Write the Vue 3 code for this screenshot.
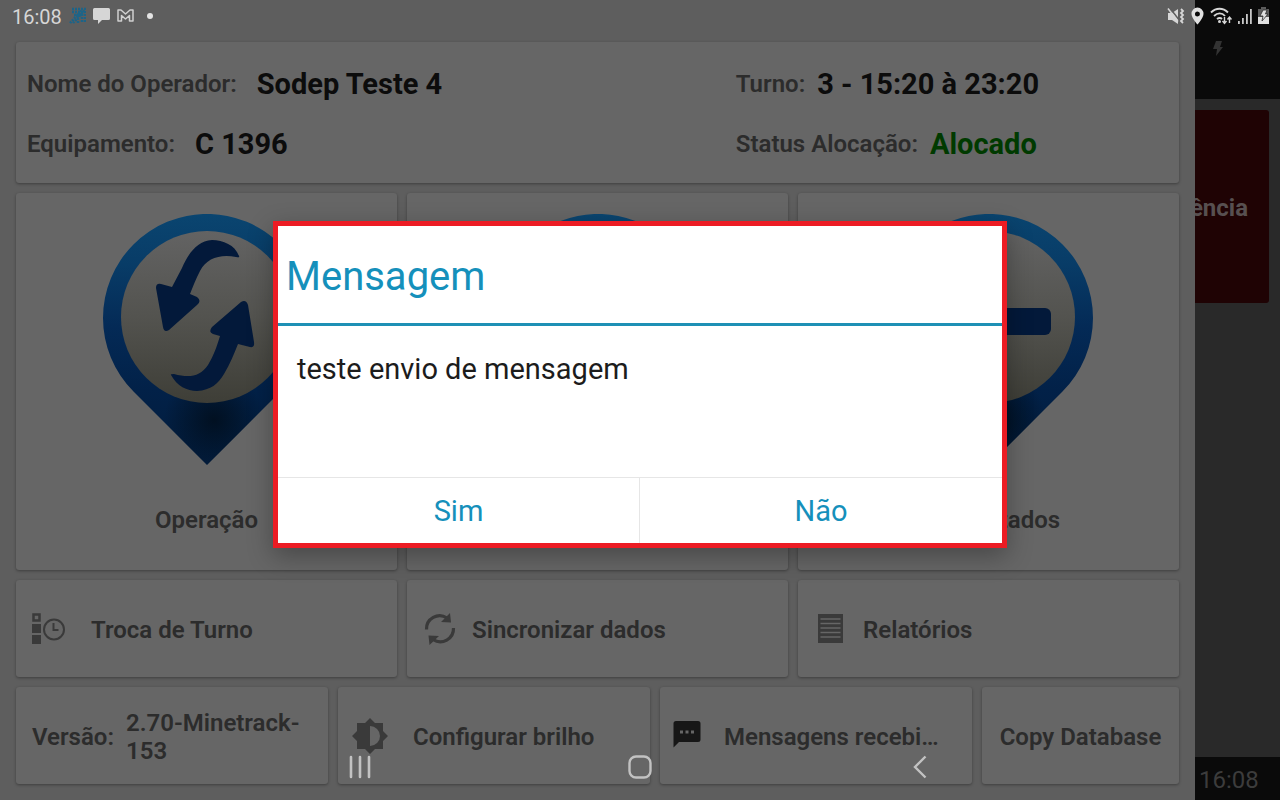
<template>
  <div class="screen">
    <main class="drawer">
      <section class="card info">
        <div v-for="field in fields" :key="field.label" class="field" :class="{ tight: field.tight }">
          <span class="field-label">{{ field.label }}</span>
          <strong class="field-value" :class="{ ok: field.ok }">{{ field.value }}</strong>
        </div>
      </section>

      <section class="row thirds">
        <button v-for="tile in tiles" :key="tile.id" class="card tile" type="button" :aria-label="tile.id">
          <svg class="pin" viewBox="0 0 210 252" aria-hidden="true">
            <defs>
              <linearGradient :id="'ring-' + tile.id" x1="0" y1="0" x2="0" y2="1">
                <stop offset="0" stop-color="#0a4570" />
                <stop offset="0.2" stop-color="#083c67" />
                <stop offset="0.45" stop-color="#042a56" />
                <stop offset="0.7" stop-color="#022148" />
                <stop offset="1" stop-color="#021c3c" />
              </linearGradient>
              <radialGradient :id="'tip-' + tile.id" gradientUnits="userSpaceOnUse" cx="112" cy="206" r="50">
                <stop offset="0" stop-color="#011021" />
                <stop offset="1" stop-color="#011021" stop-opacity="0" />
              </radialGradient>
              <linearGradient :id="'face-' + tile.id" x1="0" y1="0" x2="0" y2="1">
                <stop offset="0" stop-color="#636363" />
                <stop offset="0.5" stop-color="#53534f" />
                <stop offset="1" stop-color="#3e3e37" />
              </linearGradient>
            </defs>
            <path d="M105 251 31.500 177.500A104 104 0 1 1 178.500 177.500Z" :fill="`url(#ring-${tile.id})`" />
            <path d="M105 251 31.500 177.500A104 104 0 1 1 178.500 177.500Z" :fill="`url(#tip-${tile.id})`" />
            <circle cx="105" cy="103" r="86" :fill="`url(#face-${tile.id})`" />
            <g v-if="tile.icon === 'swap'" fill="#03193a">
              <path d="M137 42C133 31 121 26 110 26C95 27 86 40 80 54L70 73L59 70Q54 69 54 74L61 113Q62 119 67 116L95 91Q100 87 95 83L88 80C91 72 94 65 98 57C105 44 118 40 134 43Q138 44 137 42Z" />
              <path d="M69 161C75 172 85 177 95 177C109 176 116 170 122 160C128 150 132 140 136 130L148 133Q153 134 152 128L146 91Q144 85 139 88L110 113Q106 118 111 120L118 122C115 132 112 141 106 151C98 163 87 164 72 160Q68 160 69 161Z" />
            </g>
            <rect v-if="tile.icon === 'minus'" x="43" y="94" width="124" height="27" rx="6" fill="#03193a" />
          </svg>
          <span v-if="tile.label" class="tile-label">{{ tile.label }}</span>
        </button>
      </section>

      <section class="row thirds">
        <button class="card action wide-gap" type="button">
          <svg class="icon" viewBox="0 0 34 34" aria-hidden="true">
            <path d="M1.500 1.500h6v6h-6z" fill="none" stroke="#3a3a3a" stroke-width="2.500" />
            <path d="M0 11h9v9H0zM0 22h9v9H0z" fill="#3a3a3a" />
            <circle cx="22" cy="16.500" r="10" fill="none" stroke="#3a3a3a" stroke-width="2" />
            <path d="M21.500 10v7h5" fill="none" stroke="#3a3a3a" stroke-width="2" />
          </svg>
          <span>Troca de Turno</span>
        </button>
        <button class="card action" type="button">
          <svg class="icon" viewBox="0 0 34 34" aria-hidden="true">
            <path d="M3.500 16.500A13.200 13.200 0 0 1 24 5M30.500 15A13.200 13.200 0 0 1 10 26.500" fill="none" stroke="#3a3a3a" stroke-width="3.200" />
            <path d="M27 0l1 9.500-10-.5zM6.500 32l-1-9.500 10.500.500z" fill="#3a3a3a" />
          </svg>
          <span>Sincronizar dados</span>
        </button>
        <button class="card action" type="button">
          <svg class="icon" viewBox="0 0 34 34" aria-hidden="true">
            <path d="M4 1h25v29H4z" fill="#3a3a3a" />
            <path d="M6.500 6h20M6.500 10.500h20M6.500 15h20M6.500 19.500h20M6.500 24h20" stroke="#666666" stroke-width="1.600" />
          </svg>
          <span>Relatórios</span>
        </button>
      </section>

      <section class="row footer-row">
        <div class="card action version">
          <span>Versão:</span>
          <span>2.70-Minetrack-153</span>
        </div>
        <button class="card action wide-gap" type="button">
          <svg class="icon" viewBox="0 0 36 36" aria-hidden="true">
            <path d="M18-1l5 5h8v8l5 5-5 5v8h-8l-5 5-5-5H5v-8l-5-5 5-5V4h8z" fill="#3a3a3a" />
            <path d="M18 7a10 10 0 0 1 0 20z" fill="#666666" />
          </svg>
          <span>Configurar brilho</span>
        </button>
        <button class="card action messages" type="button">
          <svg class="icon" viewBox="0 0 36 36" aria-hidden="true">
            <path d="M6 2h22a2.500 2.500 0 0 1 2.500 2.500v16A2.500 2.500 0 0 1 28 23H9l-5.500 5.500v-24A2.500 2.500 0 0 1 6 2z" fill="#171717" />
            <path d="M10 11.500h3v3h-3zM15.500 11.500h3v3h-3zM21 11.500h3v3h-3z" fill="#666666" />
          </svg>
          <span>Mensagens recebi…</span>
        </button>
        <button class="card action copy" type="button">Copy Database</button>
      </section>
    </main>

    <aside class="backdrop">
      <div class="backdrop-top">
        <svg viewBox="0 0 10 16" aria-hidden="true"><path d="M3 0h6L7 6h3L3 15l1-7H0z" fill="#333333" /></svg>
      </div>
      <button class="emergency" type="button" aria-label="Emergência">ência</button>
      <div class="backdrop-clock">16:08</div>
    </aside>

    <header class="status-bar">
      <div class="status-left">
        <span class="clock">16:08</span>
        <svg width="17" height="18" viewBox="0 0 17 18" aria-hidden="true">
          <path d="M3 2h13v13M3 5h13M1 16l12-13M5 8h9M4 16l12-13M9 8v8M13 4v12" fill="none" stroke="#1d6488" stroke-width="2.500" stroke-dasharray="2 1" />
        </svg>
        <svg width="17" height="18" viewBox="0 0 17 18" aria-hidden="true">
          <path d="M1.500 1h14A1.500 1.500 0 0 1 17 2.500v9a1.500 1.500 0 0 1-1.500 1.500H9l-4 4v-4H1.500A1.500 1.500 0 0 1 0 11.500v-9A1.500 1.500 0 0 1 1.500 1z" fill="#d6d6d6" />
        </svg>
        <svg width="17" height="18" viewBox="0 0 17 18" aria-hidden="true">
          <path d="M1 3h3l4.500 4L13 3h3v11h-3.500V8.500L8.500 12l-4-3.500V14H1z" fill="none" stroke="#d0d0d0" stroke-width="1.500" stroke-linejoin="round" />
        </svg>
        <i class="dot"></i>
      </div>
      <div class="status-right">
        <svg width="18" height="18" viewBox="0 0 18 18" aria-hidden="true">
          <path d="M1 6h4l6-4v15l-6-4H1z" fill="#d6d6d6" />
          <path d="M2.500.500l10 13" stroke="#5e5e5e" stroke-width="1.500" />
          <path d="M1 1.500l10 13" stroke="#d6d6d6" stroke-width="1.500" />
          <path d="M14 2l2 2-2 2 2 2-2 2 2 2-2 2 2 2" fill="none" stroke="#d6d6d6" stroke-width="1.800" />
        </svg>
        <svg width="13" height="18" viewBox="0 0 12 18" aria-hidden="true">
          <path fill-rule="evenodd" d="M6 .500a6.300 6.300 0 0 1 6 6.500c0 4-6 10.500-6 10.500S0 11 0 7A6.300 6.300 0 0 1 6 .500zm0 4a2.500 2.500 0 1 0 0 5 2.500 2.500 0 0 0 0-5z" fill="#e0e0e0" />
        </svg>
        <svg width="22" height="18" viewBox="0 0 22 18" aria-hidden="true">
          <path d="M1 5.500c5-5 12-5 17 0M4 9c3.500-3.500 8-3.500 11 0M7 12c2-1.500 3.500-1.500 5 0" fill="none" stroke="#d6d6d6" stroke-width="1.900" />
          <circle cx="9.500" cy="14.500" r="1.500" fill="#d6d6d6" />
          <path d="M14.500 10v6M12.500 14l2 2.500 2-2.500M19.500 16v-5.500M17.500 12.500l2-2.500 2 2.500" fill="none" stroke="#d6d6d6" stroke-width="1.400" />
        </svg>
        <svg width="14" height="18" viewBox="0 0 14 18" aria-hidden="true">
          <path d="M0 14h1.800v3H0zM4 11h1.800v6H4zM8 7h1.800v10H8zM12 2h1.800v15H12z" fill="#c8c8c8" />
        </svg>
        <svg width="12" height="18" viewBox="0 0 12 18" aria-hidden="true">
          <path d="M3 0h5v2h3v9H0V2h3z" fill="#5c5c5c" />
          <path d="M0 10h11v7H0z" fill="#e0e0e0" />
          <path d="M5 3h4L7.500 7H10l-6 7 1-5H2z" fill="#e0e0e0" stroke="#2c2c2c" stroke-width="0.800" />
        </svg>
      </div>
    </header>

    <nav class="nav-bar">
      <button type="button" aria-label="Recentes">
        <svg width="24" height="24" viewBox="0 0 24 24"><path d="M3 2v20M12 2v20M21 2v20" stroke="#c2c2c2" stroke-width="2.600" stroke-linecap="round" /></svg>
      </button>
      <button type="button" aria-label="Início">
        <svg width="24" height="24" viewBox="0 0 24 24"><rect x="1.500" y="1.500" width="21" height="21" rx="6.500" fill="none" stroke="#c2c2c2" stroke-width="2.400" /></svg>
      </button>
      <button type="button" aria-label="Voltar">
        <svg width="24" height="24" viewBox="0 0 24 24"><path d="M17.500 1.500L7 12l10.500 10.500" fill="none" stroke="#c2c2c2" stroke-width="2.400" /></svg>
      </button>
    </nav>

    <div v-if="isOpen" class="modal-overlay">
      <div class="modal-box" role="dialog" aria-labelledby="modal-title">
        <h2 id="modal-title" class="modal-title">Mensagem</h2>
        <p class="modal-text">teste envio de mensagem</p>
        <div class="modal-actions">
          <button type="button" @click="close">Sim</button>
          <button type="button" @click="close">Não</button>
        </div>
      </div>
    </div>
  </div>
</template>

<script setup>
import { ref } from 'vue'

const isOpen = ref(true)

const fields = [
  { label: 'Nome do Operador:', value: 'Sodep Teste 4' },
  { label: 'Turno:', value: '3 - 15:20 à 23:20', tight: true },
  { label: 'Equipamento:', value: 'C 1396' },
  { label: 'Status Alocação:', value: 'Alocado', tight: true, ok: true }
]

const tiles = [
  { id: 'operacao', label: 'Operação', icon: 'swap' },
  { id: 'central', label: '', icon: '' },
  { id: 'completados', label: 'Completados', icon: 'minus' }
]

const close = () => {
  isOpen.value = false
}
</script>

<style>
body {
  margin: 0;
  background: #292929;
}
</style>

<style scoped>
.screen {
  position: relative;
  min-height: 100vh;
  display: grid;
  grid-template-columns: 1fr 85px;
  font-family: Roboto, "Liberation Sans", sans-serif;
  color: #2c2c2c;
  overflow: hidden;
}

button {
  font: inherit;
  color: inherit;
  border: none;
  background: none;
  padding: 0;
  cursor: pointer;
}

.drawer {
  box-sizing: border-box;
  min-width: 0;
  padding: 42px 16px 16px;
  display: grid;
  grid-template-rows: auto 1fr 97px 97px;
  gap: 10px;
  background: #5e5e5e;
}

.card {
  box-sizing: border-box;
  min-width: 0;
  background: #666666;
  border-radius: 3px;
  box-shadow: 0 1px 3px rgba(0, 0, 0, 0.35);
}

.info {
  display: grid;
  grid-template-columns: 1.64fr 1fr;
  grid-auto-rows: 60px;
  padding: 12px 11px 9px;
}

.field {
  display: flex;
  align-items: center;
  gap: 20px;
  white-space: nowrap;
}

.field.tight {
  gap: 12px;
}

.field-label {
  font-size: 24px;
  font-weight: 600;
}

.field-value {
  font-size: 29px;
  font-weight: 700;
  color: #0c0c0c;
}

.field-value.ok {
  color: #003a00;
}

.row {
  display: grid;
  gap: 10px;
}

.thirds {
  grid-template-columns: repeat(3, 1fr);
}

.footer-row {
  grid-template-columns: repeat(3, 1fr) auto;
}

.tile {
  display: flex;
  flex-direction: column;
  align-items: center;
  gap: 40px;
  padding-top: 21px;
}

.pin {
  width: 210px;
  height: 252px;
}

.tile-label {
  font-size: 24px;
  line-height: 28px;
  font-weight: 600;
}

.action {
  display: flex;
  align-items: center;
  gap: 15px;
  padding: 2px 16px 0;
  font-size: 24px;
  line-height: 28px;
  font-weight: 600;
  text-align: left;
  white-space: nowrap;
}

.icon {
  flex: none;
  width: 34px;
  height: 34px;
  overflow: visible;
}

.wide-gap {
  gap: 25px;
}

.footer-row .icon {
  width: 36px;
  height: 36px;
}

.footer-row .wide-gap {
  padding-left: 14px;
}

.messages {
  gap: 18px;
  padding: 2px 16px 0 10px;
}

.copy {
  min-width: 197px;
  justify-content: center;
}

.version {
  gap: 12px;
  white-space: normal;
}

.backdrop {
  display: flex;
  flex-direction: column;
  background: #292929;
  overflow: hidden;
}

.backdrop-top {
  height: 99px;
  background: #0a0a0a;
}

.backdrop-top svg {
  width: 10px;
  height: 16px;
  margin: 41px 0 0 18px;
}

.emergency {
  display: flex;
  align-items: center;
  justify-content: flex-end;
  height: 193px;
  margin: 11px 11px 0 0;
  padding: 2px 21px 0 0;
  border-radius: 0 3px 3px 0;
  background: #1f0304;
  color: #575050;
  font-size: 24px;
  font-weight: 700;
}

.backdrop-clock {
  margin-top: auto;
  padding-left: 4px;
  height: 43px;
  line-height: 46px;
  background: #0a0a0a;
  color: #3c3c3c;
  font-size: 24px;
}

.status-bar {
  position: absolute;
  top: 0;
  left: 0;
  right: 0;
  height: 32px;
  padding: 0 10px 0 12px;
  display: flex;
  justify-content: space-between;
}

.status-left,
.status-right {
  display: flex;
  align-items: center;
  gap: 7px;
}

.status-right {
  gap: 6px;
}

.clock {
  font-size: 20px;
  line-height: 34px;
  padding-top: 1px;
  color: #d6d6d6;
}

.dot {
  width: 6px;
  height: 6px;
  margin-left: 6px;
  border-radius: 50%;
  background: #e4e4e4;
}

.nav-bar {
  position: absolute;
  bottom: 9px;
  left: 0;
  right: 0;
  max-width: 840px;
  margin: 0 auto;
  display: flex;
}

.nav-bar button {
  flex: 1;
  height: 48px;
  display: flex;
  align-items: center;
  justify-content: center;
}

.modal-overlay {
  position: absolute;
  inset: 0 0 31px;
  display: flex;
  align-items: center;
  justify-content: center;
}

.modal-box {
  box-sizing: border-box;
  width: 734px;
  max-width: 100%;
  background: #ffffff;
  border: 5px solid #ec1c24;
  box-shadow: 0 8px 24px rgba(0, 0, 0, 0.3);
}

.modal-title {
  margin: 0;
  padding: 5px 8px 0;
  border-bottom: 3px solid #1e90b5;
  color: #1590bb;
  font-size: 40px;
  line-height: 92px;
  font-weight: 400;
}

.modal-text {
  margin: 0;
  min-height: 108px;
  padding: 27px 19px 16px;
  color: #1c1c1c;
  font-size: 29px;
  line-height: 32px;
}

.modal-actions {
  display: grid;
  grid-template-columns: 1fr 1fr;
  border-top: 1px solid #e6e6e6;
}

.modal-actions button {
  height: 65px;
  color: #1590bb;
  font-size: 29px;
}

.modal-actions button:first-child {
  border-right: 1px solid #e6e6e6;
}
</style>
